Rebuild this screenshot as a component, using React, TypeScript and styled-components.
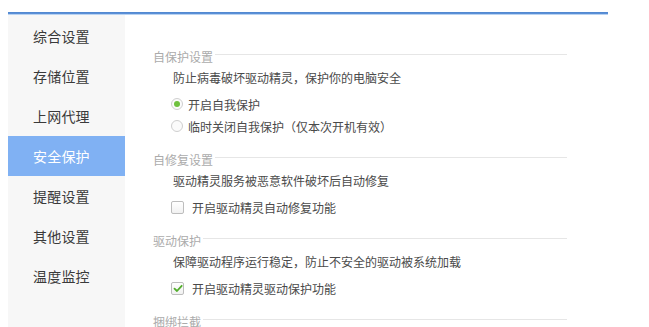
import React from "react";
import styled, { createGlobalStyle } from "styled-components";

const Global = createGlobalStyle`
  html, body { margin: 0; padding: 0; background: #ffffff; }
  body { font-family: "Noto Sans CJK SC", "Noto Sans", sans-serif; overflow: hidden; }
`;

const Window = styled.div`
  margin: 12px 0 0 8px;
  width: 600px;
  height: 315px;
  display: flex;
  flex-direction: column;
`;

const TopBar = styled.div`
  height: 3px;
  flex: none;
  background: linear-gradient(#4f86cf 0, #5e92d8 2px, #b8d2f1 2px, #b8d2f1 3px);
`;

const Main = styled.div`
  flex: 1;
  display: flex;
  min-height: 0;
`;

const Sidebar = styled.nav`
  width: 117px;
  flex: none;
  background: #f7f7f7;
  padding-top: 1px;
  display: flex;
  flex-direction: column;
`;

const NavItem = styled.div<{ $active?: boolean }>`
  height: 40px;
  line-height: 40px;
  padding-left: 25px;
  font-size: 14px;
  color: ${(p) => (p.$active ? "#ffffff" : "#3a3a3a")};
  background: ${(p) => (p.$active ? "#80b1f3" : "transparent")};
  letter-spacing: 0.2px;
`;

const Content = styled.div`
  flex: 1;
  padding: 33px 41px 0 28px;
  display: flex;
  flex-direction: column;
  gap: 14px;
  overflow: hidden;
`;

const Section = styled.section`
  display: flex;
  flex-direction: column;
`;

const TitleRow = styled.div`
  height: 18px;
  display: flex;
  align-items: flex-start;
  gap: 2px;
`;

const Title = styled.span`
  font-size: 12px;
  line-height: 18px;
  color: #ababab;
  white-space: nowrap;
`;

const Rule = styled.div`
  flex: 1;
  height: 1px;
  margin-top: 6px;
  background: #e6e6e6;
`;

const Body = styled.div`
  padding-left: 18px;
  display: flex;
  flex-direction: column;
`;

const Desc = styled.div`
  height: 24px;
  line-height: 24px;
  margin-left: 2px;
  font-size: 12px;
  color: #4a4a4a;
  white-space: nowrap;
`;

const Options = styled.div`
  margin-top: 3px;
  display: flex;
  flex-direction: column;
`;

const Option = styled.label<{ $gap: number }>`
  height: 22px;
  display: flex;
  align-items: center;
  gap: ${(p) => p.$gap}px;
  font-size: 12px;
  color: #4a4a4a;
  white-space: nowrap;
`;

const RadioMark = styled.span<{ $checked?: boolean }>`
  width: 10px;
  height: 10px;
  border-radius: 50%;
  border: 1px solid #cfcfcf;
  background: #fbfbfb;
  display: flex;
  align-items: center;
  justify-content: center;
  &::after {
    content: "";
    width: 6px;
    height: 6px;
    border-radius: 50%;
    background: ${(p) => (p.$checked ? "#6fc13e" : "transparent")};
  }
`;

const CheckMark = styled.span`
  width: 11px;
  height: 11px;
  border: 1px solid #bdbdbd;
  border-radius: 2px;
  background: linear-gradient(#ffffff, #f1f1f1);
  display: flex;
  align-items: center;
  justify-content: center;
`;

function Radio({ checked, label }: { checked?: boolean; label: string }) {
  return (
    <Option $gap={5}>
      <RadioMark $checked={checked} />
      {label}
    </Option>
  );
}

function Check({ checked, label }: { checked?: boolean; label: string }) {
  return (
    <Option $gap={8}>
      <CheckMark>
        {checked && (
          <svg width="10" height="9" viewBox="0 0 10 9">
            <path d="M1.5 4.6 L4 7 L8.7 1.8" fill="none" stroke="#52ad2c" strokeWidth="1.8" strokeLinecap="round" strokeLinejoin="round" />
          </svg>
        )}
      </CheckMark>
      {label}
    </Option>
  );
}

const navItems = ["综合设置", "存储位置", "上网代理", "安全保护", "提醒设置", "其他设置", "温度监控"];

export default function App() {
  return (
    <>
      <Global />
      <Window>
        <TopBar />
        <Main>
          <Sidebar>
            {navItems.map((n) => (
              <NavItem key={n} $active={n === "安全保护"}>
                {n}
              </NavItem>
            ))}
          </Sidebar>
          <Content>
            <Section>
              <TitleRow>
                <Title>自保护设置</Title>
                <Rule />
              </TitleRow>
              <Body>
                <Desc>防止病毒破坏驱动精灵，保护你的电脑安全</Desc>
                <Options>
                  <Radio checked label="开启自我保护" />
                  <Radio label="临时关闭自我保护（仅本次开机有效）" />
                </Options>
              </Body>
            </Section>
            <Section>
              <TitleRow>
                <Title>自修复设置</Title>
                <Rule />
              </TitleRow>
              <Body>
                <Desc>驱动精灵服务被恶意软件破坏后自动修复</Desc>
                <Options>
                  <Check label="开启驱动精灵自动修复功能" />
                </Options>
              </Body>
            </Section>
            <Section>
              <TitleRow>
                <Title>驱动保护</Title>
                <Rule />
              </TitleRow>
              <Body>
                <Desc>保障驱动程序运行稳定，防止不安全的驱动被系统加载</Desc>
                <Options>
                  <Check checked label="开启驱动精灵驱动保护功能" />
                </Options>
              </Body>
            </Section>
            <Section>
              <TitleRow>
                <Title>捆绑拦截</Title>
                <Rule />
              </TitleRow>
            </Section>
          </Content>
        </Main>
      </Window>
    </>
  );
}
